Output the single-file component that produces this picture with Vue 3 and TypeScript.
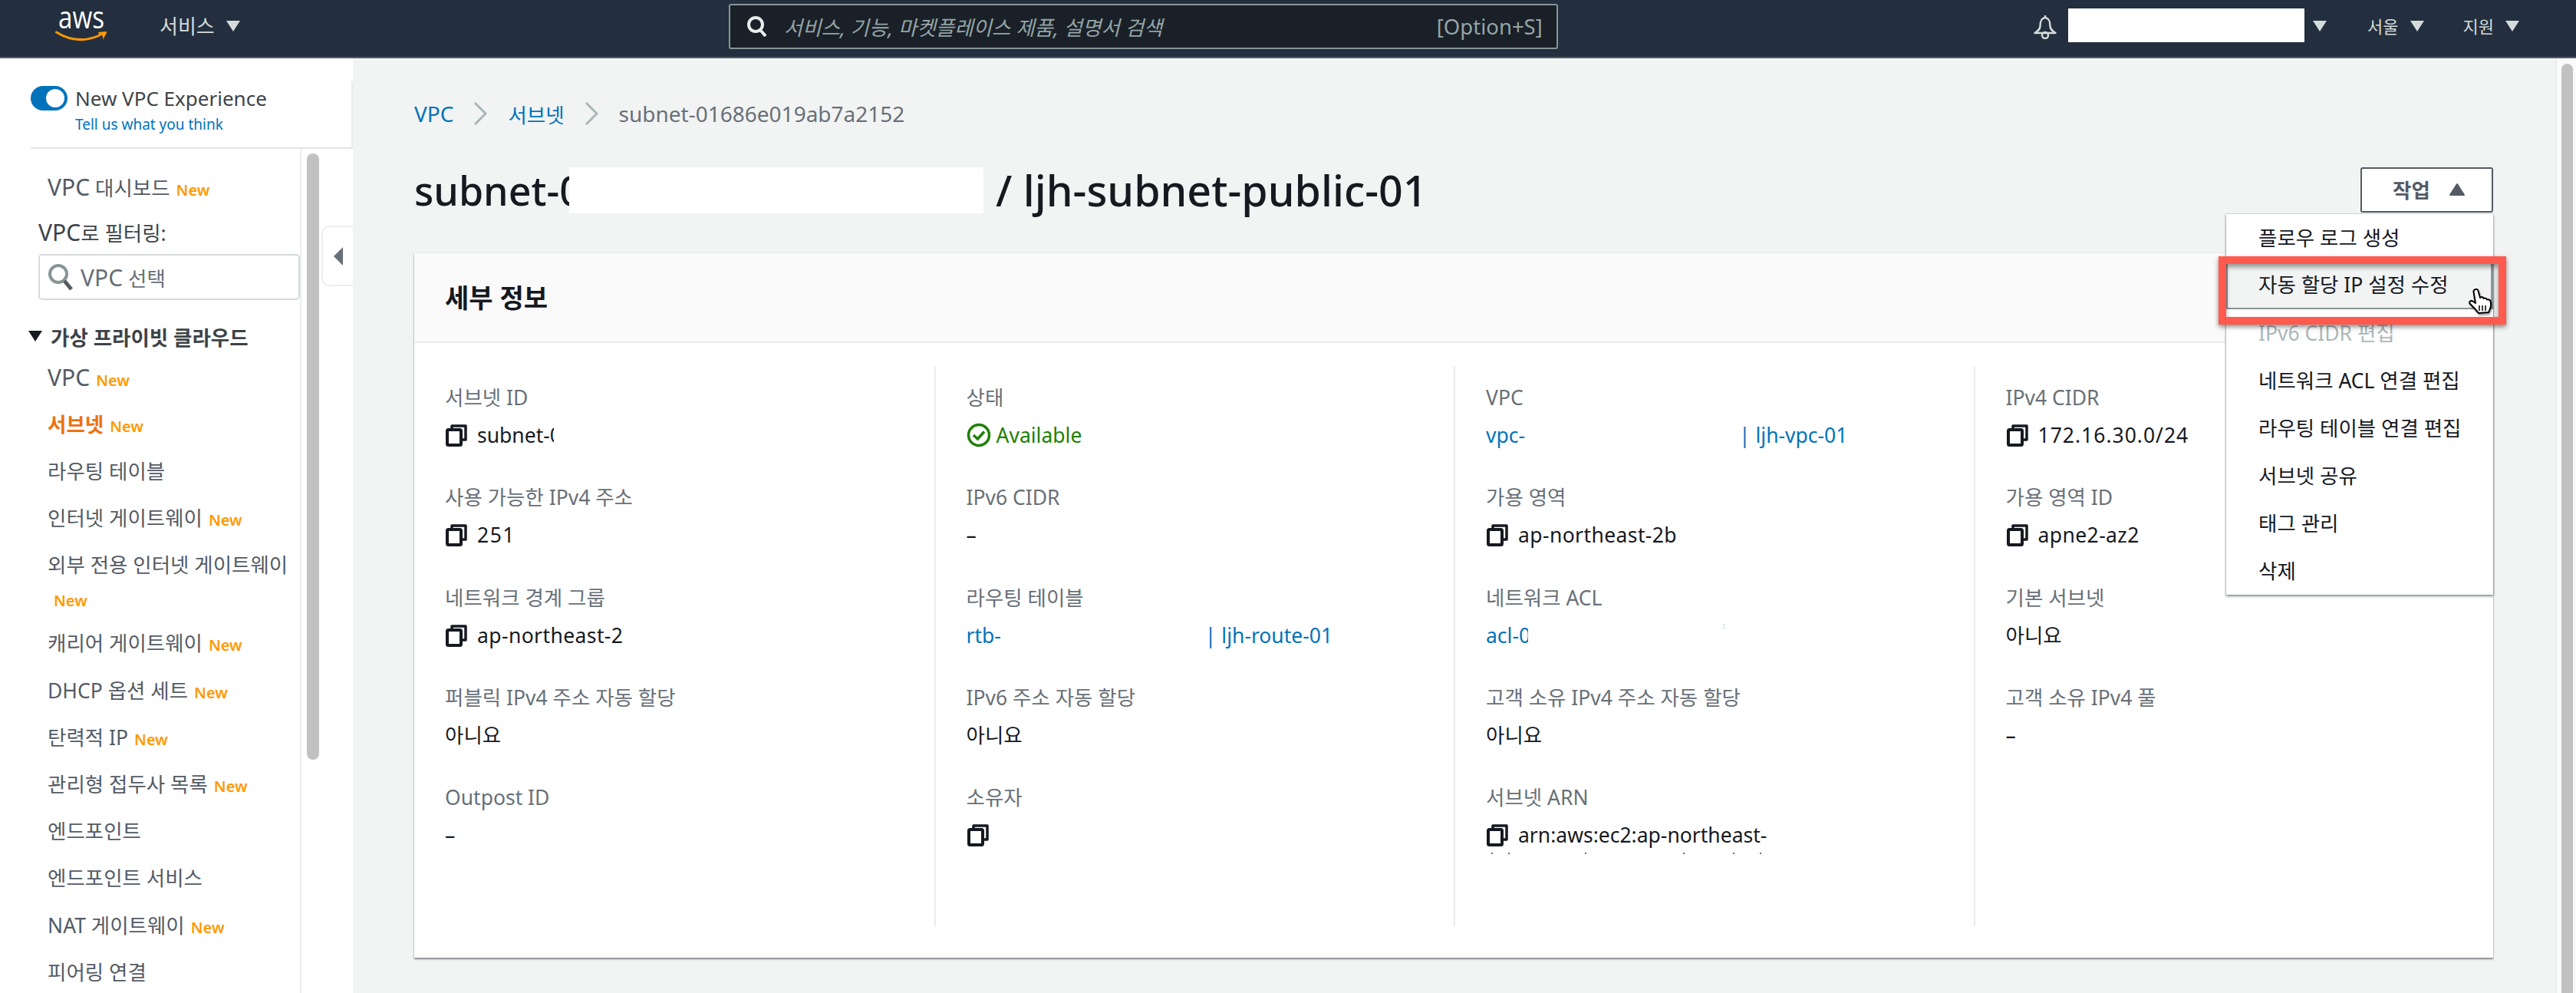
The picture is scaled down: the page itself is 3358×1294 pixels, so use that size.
<script setup lang="ts">
interface Field {
  label: string
  kind: 'text' | 'copy' | 'status' | 'link' | 'blank'
  value?: string
  clip?: number
  suffix?: string
  gap?: number
  ticks?: boolean
  spacing?: number
}
interface NavItem {
  label: string
  lead?: string
  isNew?: boolean
  active?: boolean
  wrap?: boolean
}
const navItems: NavItem[] = [
  { label: '', lead: 'VPC', isNew: true },
  { label: '서브넷', isNew: true, active: true },
  { label: '라우팅 테이블' },
  { label: '인터넷 게이트웨이', isNew: true },
  { label: '외부 전용 인터넷 게이트웨이', isNew: true, wrap: true },
  { label: '캐리어 게이트웨이', isNew: true },
  { label: 'DHCP 옵션 세트', isNew: true },
  { label: '탄력적 IP', isNew: true },
  { label: '관리형 접두사 목록', isNew: true },
  { label: '엔드포인트' },
  { label: '엔드포인트 서비스' },
  { label: 'NAT 게이트웨이', isNew: true },
  { label: '피어링 연결' },
]
const columns: Field[][] = [
  [
    { label: '서브넷 ID', kind: 'copy', value: 'subnet-01686e019ab7a2152', clip: 100 },
    { label: '사용 가능한 IPv4 주소', kind: 'copy', value: '251', spacing: 1.5 },
    { label: '네트워크 경계 그룹', kind: 'copy', value: 'ap-northeast-2', spacing: 0.4 },
    { label: '퍼블릭 IPv4 주소 자동 할당', kind: 'text', value: '아니요' },
    { label: 'Outpost ID', kind: 'text', value: '–' },
  ],
  [
    { label: '상태', kind: 'status', value: 'Available' },
    { label: 'IPv6 CIDR', kind: 'text', value: '–' },
    { label: '라우팅 테이블', kind: 'link', value: 'rtb-', suffix: '| ljh-route-01', gap: 266 },
    { label: 'IPv6 주소 자동 할당', kind: 'text', value: '아니요' },
    { label: '소유자', kind: 'copy', value: '' },
  ],
  [
    { label: 'VPC', kind: 'link', value: 'vpc-', suffix: '| ljh-vpc-01', gap: 279 },
    { label: '가용 영역', kind: 'copy', value: 'ap-northeast-2b', spacing: 0.4 },
    { label: '네트워크 ACL', kind: 'link', value: 'acl-0123456', clip: 55, suffix: ':', gap: 254 },
    { label: '고객 소유 IPv4 주소 자동 할당', kind: 'text', value: '아니요' },
    { label: '서브넷 ARN', kind: 'copy', value: 'arn:aws:ec2:ap-northeast-', ticks: true },
  ],
  [
    { label: 'IPv4 CIDR', kind: 'copy', value: '172.16.30.0/24', spacing: 1 },
    { label: '가용 영역 ID', kind: 'copy', value: 'apne2-az2', spacing: 0.4 },
    { label: '기본 서브넷', kind: 'text', value: '아니요' },
    { label: '고객 소유 IPv4 풀', kind: 'text', value: '–' },
  ],
]
const menuItems = [
  { label: '플로우 로그 생성' },
  { label: '자동 할당 IP 설정 수정', hover: true },
  { label: 'IPv6 CIDR 편집', disabled: true },
  { label: '네트워크 ACL 연결 편집' },
  { label: '라우팅 테이블 연결 편집' },
  { label: '서브넷 공유' },
  { label: '태그 관리' },
  { label: '삭제' },
]
const tickOffsets = [7, 29, 129, 257, 322, 357]
</script>

<template>
  <div class="page">
    <header class="topbar">
      <svg class="logo" viewBox="0 0 68 42" width="68" height="42">
        <text x="4" y="22" class="logo-text" textLength="60" lengthAdjust="spacingAndGlyphs">aws</text>
        <path d="M1.5 27 Q29 44 58 31" fill="none" stroke="#f90" stroke-width="3" stroke-linecap="round" />
        <path d="M56 27 L66 26 Q67.500 26 67 28 L62 37 Q63.500 30 57 30 Z" fill="#f90" />
      </svg>
      <span class="top-link services">서비스</span>
      <svg class="caret" viewBox="0 0 20 16"><path d="M1 1 H19 L10 15 Z" /></svg>
      <div class="search">
        <svg class="search-icon" viewBox="0 0 28 28" width="28" height="28">
          <circle cx="12" cy="12" r="9" fill="none" stroke="#eaeded" stroke-width="4" />
          <path d="M18 19 L25 27" stroke="#eaeded" stroke-width="4" fill="none" />
        </svg>
        <span class="search-ph">서비스, 기능, 마켓플레이스 제품, 설명서 검색</span>
        <span class="search-key">[Option+S]</span>
      </div>
      <div class="top-right">
        <svg class="bell" viewBox="0 0 32 32" width="32" height="32">
          <path d="M16 4 C10 5 9.500 10 9.500 15 C9.500 19 7 21 2.500 24 H29.500 C25 21 22.500 19 22.500 15 C22.500 10 22 5 16 4 Z" fill="none" stroke="#d5dbdb" stroke-width="2.500" stroke-linejoin="round" />
          <path d="M16 1 V4" stroke="#d5dbdb" stroke-width="2.500" />
          <circle cx="16" cy="27" r="4" fill="none" stroke="#d5dbdb" stroke-width="2.500" />
        </svg>
        <div class="account"></div>
        <svg class="caret" viewBox="0 0 20 16"><path d="M1 1 H19 L10 15 Z" /></svg>
        <span class="top-link small region">서울</span>
        <svg class="caret" viewBox="0 0 20 16"><path d="M1 1 H19 L10 15 Z" /></svg>
        <span class="top-link small support">지원</span>
        <svg class="caret" viewBox="0 0 20 16"><path d="M1 1 H19 L10 15 Z" /></svg>
      </div>
    </header>

    <div class="body">
      <aside class="sidebar">
        <div class="side-top">
          <div class="toggle-row">
            <span class="toggle"><span class="knob"></span></span>
            <span class="toggle-label">New VPC Experience</span>
          </div>
          <a class="feedback">Tell us what you think</a>
        </div>
        <nav class="nav">
          <div class="nav-item"><span><span class="lead">VPC</span> 대시보드</span><span class="new">New</span></div>
          <div class="filter-label"><span class="lead">VPC</span>로 필터링:</div>
          <div class="vpc-select">
            <svg viewBox="0 0 34 36" width="34" height="36">
              <circle cx="14" cy="14" r="11" fill="none" stroke="#879596" stroke-width="4" />
              <path d="M22 23 L31 34" stroke="#545b64" stroke-width="5" />
            </svg>
            <span><span class="lead">VPC</span> 선택</span>
          </div>
          <div class="nav-group">
            <svg viewBox="0 0 20 16" width="20" height="16"><path d="M1 1 H19 L10 15 Z" fill="#16191f" /></svg>
            <span>가상 프라이빗 클라우드</span>
          </div>
          <div v-for="item in navItems" :key="item.label + item.lead" class="nav-item" :class="{ active: item.active, wrapped: item.wrap }">
            <span class="nav-label"><span v-if="item.lead" class="lead">{{ item.lead }}</span>{{ item.label }}</span><span v-if="item.isNew" class="new">New</span>
          </div>
        </nav>
        <div class="side-thumb"></div>
        <div class="collapse"><svg viewBox="0 0 14 26" width="14" height="26"><path d="M13 1 V25 L1 13 Z" fill="#687078" /></svg></div>
      </aside>

      <main class="main">
        <div class="crumbs">
          <a class="crumb latin">VPC</a>
          <svg class="chev" viewBox="0 0 20 30" width="20" height="30"><path d="M3 1 L17 15 L3 29" fill="none" stroke="#aab7b8" stroke-width="3" /></svg>
          <a class="crumb">서브넷</a>
          <svg class="chev" viewBox="0 0 20 30" width="20" height="30"><path d="M3 1 L17 15 L3 29" fill="none" stroke="#aab7b8" stroke-width="3" /></svg>
          <span class="crumb-cur latin">subnet-01686e019ab7a2152</span>
        </div>

        <div class="title-row">
          <h1 class="title">
            <span class="title-clip">subnet-01686e019ab7a2152</span>
            <span class="title-mask"></span>
            <span class="title-name">/ ljh-subnet-public-01</span>
          </h1>
          <div class="actions">
            <button class="action-btn">
              <span>작업</span>
              <svg viewBox="0 0 22 18" width="22" height="18"><path d="M2 16 H20 L11 2 Z" fill="#545b64" stroke="#545b64" stroke-width="2" stroke-linejoin="round" /></svg>
            </button>
            <div class="menu">
              <div
                v-for="m in menuItems"
                :key="m.label"
                class="menu-item"
                :class="{ hover: m.hover, disabled: m.disabled }"
              >{{ m.label }}</div>
              <div class="highlight"></div>
              <svg class="hand" viewBox="0 0 32 34" width="32" height="34">
                <path d="M8 1.500 C10 0 12 1 12.500 3 L15 12 C17 10.500 19 11 19.500 13 C21 12 23.500 12.500 24 14.500 C25.500 14 28 14.500 28.500 16.500 C30 21 28 27 26 31 L13 32 C10 28 5 23 1.500 19.500 C0.500 17.500 2 15.500 4.500 16 L9 19 L6.500 4 C6.400 3 7 2 8 1.500 Z" fill="#fff" stroke="#000" stroke-width="2" stroke-linejoin="round" />
                <path d="M14 22 V29 M18 22 V29 M22 22 V29" stroke="#000" stroke-width="1.500" />
              </svg>
            </div>
          </div>
        </div>

        <section class="card">
          <div class="card-head"><h2>세부 정보</h2></div>
          <div class="card-body">
            <div v-for="(col, ci) in columns" :key="ci" class="col">
              <div v-for="f in col" :key="f.label" class="field">
                <div class="label">{{ f.label }}</div>
                <div class="value" :class="{ link: f.kind === 'link', ok: f.kind === 'status' }">
                  <svg v-if="f.kind === 'copy'" class="copy" viewBox="0 0 30 30" width="30" height="30">
                    <path d="M9 7 V3 H27 V21 H22" fill="none" stroke="#16191f" stroke-width="3.500" stroke-linejoin="round" />
                    <rect x="3" y="8" width="18" height="20" rx="1.500" fill="none" stroke="#16191f" stroke-width="4" />
                  </svg>
                  <svg v-if="f.kind === 'status'" class="status" viewBox="0 0 32 32" width="32" height="32">
                    <circle cx="16" cy="16" r="13.500" fill="none" stroke="#1d8102" stroke-width="3.500" />
                    <path d="M9 16 L14.500 21 L23 11.500" fill="none" stroke="#1d8102" stroke-width="3.500" />
                  </svg>
                  <span
                    class="val-text"
                    :class="{ clipped: f.clip }"
                    :style="{ width: f.clip ? f.clip + 'px' : undefined, letterSpacing: f.spacing ? f.spacing + 'px' : undefined }"
                  >{{ f.value }}</span>
                  <span v-if="f.suffix" :class="{ speck: f.suffix === ':' }" :style="{ marginLeft: f.gap + 'px' }">{{ f.suffix }}</span>
                  <span v-if="f.ticks" class="ticks">
                    <i v-for="t in tickOffsets" :key="t" :style="{ left: t + 'px' }"></i>
                  </span>
                </div>
              </div>
            </div>
          </div>
        </section>
      </main>

      <div class="page-scroll"><div class="page-thumb"></div></div>
    </div>
  </div>
</template>

<style>
html, body { margin: 0; padding: 0; background: #f2f3f3; height: 1294px; overflow: hidden; }
</style>

<style scoped>
.page {
  width: 3358px;
  height: 1294px;
  overflow: hidden;
  display: flex;
  flex-direction: column;
  font-family: "Noto Sans", "Noto Sans CJK KR", sans-serif;
  font-size: 26.500px;
  color: #16191f;
  background: #f2f3f3;
}
.topbar {
  height: 76px;
  flex: none;
  box-sizing: border-box;
  border-bottom: 2px solid #545b64;
  background: #232f3e;
  display: flex;
  align-items: center;
}
.logo { margin-left: 72px; margin-top: -2px; flex: none; }
.logo-text { font-family: "Open Sans", sans-serif; font-size: 40px; fill: #fff; }
.top-link { color: #d5dbdb; font-size: 26px; line-height: 40px; margin-top: -6px; }
.top-link.small { font-size: 22px; }
.services { margin-left: 68px; }
.caret { width: 20px; height: 16px; fill: #d5dbdb; flex: none; margin-left: 14px; margin-top: -6px; }
.search {
  width: 1081px;
  height: 59px;
  box-sizing: border-box;
  margin-left: 636px;
  margin-top: -6px;
  border: 2px solid #879596;
  border-radius: 3px;
  background: #1a2028;
  display: flex;
  align-items: center;
  padding: 0 18px 0 21px;
}
.search-icon { flex: none; }
.search-ph { margin-left: 21px; font-style: italic; color: #95a5a6; font-size: 26.500px; }
.search-key { margin-left: auto; color: #95a5a6; font-size: 27.500px; }
.top-right { margin-left: auto; padding-right: 73px; display: flex; align-items: center; }
.bell { margin-top: -4px; }
.account { width: 308px; height: 44px; margin-left: 14px; margin-top: -8px; background: #fff; }
.account + .caret { margin-left: 10px; }
.region { margin-left: 52px; }
.support { margin-left: 50px; }

.body { flex: 1; display: flex; min-height: 0; position: relative; }
.sidebar { width: 460px; flex: none; background: #fff; position: relative; }
.side-top {
  margin-left: 40px;
  padding-top: 36px;
  border-bottom: 2px solid #e4e6e6;
  position: relative;
  height: 80px;
}
.side-top::after {
  content: "";
  position: absolute;
  right: 0;
  top: 30px;
  bottom: 0;
  width: 2px;
  background: #eaeded;
}
.toggle-row { display: flex; align-items: center; height: 32px; }
.toggle {
  width: 48px;
  height: 32px;
  border-radius: 16px;
  background: #0073bb;
  position: relative;
  flex: none;
}
.knob {
  position: absolute;
  left: 20px;
  top: 4px;
  width: 24px;
  height: 24px;
  border-radius: 50%;
  background: #fff;
}
.toggle-label { margin-left: 10px; font-size: 26px; color: #3d4347; white-space: nowrap; }
.feedback { display: block; margin: 4px 0 0 58px; font-size: 19px; line-height: 28px; color: #0073bb; white-space: nowrap; }

.nav {
  width: 393px;
  height: 1100px;
  box-sizing: border-box;
  border-right: 2px solid #eaeded;
  padding-top: 19px;
  overflow: hidden;
  color: #545b64;
}
.nav-item {
  height: 61.200px;
  line-height: 44px;
  box-sizing: border-box;
  padding: 8.500px 0 0 62px;
  white-space: nowrap;
}
.lead { font-size: 30px; }
.nav-item.wrapped { height: 102px; white-space: normal; padding-right: 4px; }
.nav-item.wrapped .new { margin-left: 8px; }
.nav-item.wrapped .nav-label { display: block; white-space: nowrap; }
.nav-item.active .nav-label { color: #ec7211; font-weight: 700; }
.new { color: #ff9900; font-size: 20px; font-weight: 600; margin-left: 8px; }
.filter-label { margin: 7px 0 0 50px; height: 44px; line-height: 44px; color: #3d4347; font-size: 26.500px; }
.vpc-select {
  margin: 6px 0 0 50px;
  width: 341px;
  height: 60px;
  box-sizing: border-box;
  border: 2px solid #d5dbdb;
  border-radius: 5px;
  display: flex;
  align-items: center;
  padding-left: 10px;
  color: #687078;
  gap: 9px;
}
.nav-group {
  margin: 24px 0 0 36px;
  height: 46px;
  display: flex;
  align-items: center;
  gap: 10px;
  font-weight: 700;
  color: #3d4347;
  font-size: 26.500px;
}
.side-thumb {
  position: absolute;
  left: 400px;
  top: 124px;
  width: 16px;
  height: 790px;
  border-radius: 8px;
  background: #c1c1c1;
}
.collapse {
  position: absolute;
  left: 419px;
  top: 218px;
  width: 41px;
  height: 79px;
  box-sizing: border-box;
  background: #fff;
  border: 2px solid #eaeded;
  border-right: none;
  border-radius: 10px 0 0 10px;
  display: flex;
  align-items: center;
  padding-left: 13px;
}

.main { flex: 1; padding: 52px 81px 0 80px; min-width: 0; }
.crumbs { display: flex; align-items: center; height: 40px; }
.latin { font-size: 28px; }
.crumb { color: #0073bb; }
.chev { margin: 0 26px 0 25px; flex: none; }
.crumb-cur { color: #687078; }
.title-row { display: flex; justify-content: space-between; margin-top: 50px; height: 60px; }
.title { margin: 0; display: flex; align-items: center; font-size: 55.500px; font-weight: 500; line-height: 60px; white-space: nowrap; }
.title-clip { width: 202px; overflow: hidden; font-size: 52px; }
.title-mask { width: 540px; height: 60px; background: #fff; flex: none; }
.title-name { margin-left: 16px; }
.actions { position: relative; width: 173px; }
.action-btn {
  width: 173px;
  height: 59px;
  box-sizing: border-box;
  border: 2px solid #545b64;
  border-radius: 3px;
  background: #fff;
  color: #545b64;
  font: inherit;
  font-size: 26.500px;
  font-weight: 700;
  display: flex;
  align-items: center;
  justify-content: center;
  gap: 24px;
  padding: 0 0 2px 6px;
}
.menu {
  position: absolute;
  top: 61px;
  right: 0;
  width: 348px;
  background: #fff;
  box-shadow: 0 2px 3px rgba(60, 75, 85, .6), 0 0 2px rgba(100, 110, 115, .5);
  z-index: 5;
}
.menu-item {
  height: 62px;
  line-height: 62px;
  box-sizing: border-box;
  padding-left: 42px;
  white-space: nowrap;
}
.menu-item.hover { background: #f2f3f3; border: 2px solid #879596; border-width: 0 3px 2px 2px; padding-left: 40px; line-height: 60px; }
.menu-item.disabled { color: #aab7b8; }
.highlight {
  position: absolute;
  left: -10px;
  top: 55px;
  width: 375px;
  height: 89px;
  box-sizing: border-box;
  border: 10px solid #ff5a4d;
  box-shadow: 0 3px 6px rgba(0, 0, 0, .45), inset 0 4px 6px rgba(0, 0, 0, .4);
}
.hand { position: absolute; left: 316px; top: 97px; filter: drop-shadow(1px 2px 1px rgba(0, 0, 0, .4)); }

.card {
  margin-top: 52px;
  height: 918px;
  background: #fff;
  box-shadow: 0 2px 2px rgba(84, 91, 100, .7), 0 0 1px rgba(0, 28, 36, .2);
  display: flex;
  flex-direction: column;
}
.card-head {
  height: 117px;
  flex: none;
  box-sizing: border-box;
  padding: 0 0 3px 40px;
  background: #fafafa;
  border-bottom: 2px solid #eaeded;
  display: flex;
  align-items: center;
}
.card-head h2 { margin: 0; font-size: 34px; font-weight: 700; }
.card-body { display: grid; grid-template-columns: repeat(4, 1fr); padding-top: 31px; }
.col { height: 729px; box-sizing: border-box; padding: 20px 0 0 40px; border-left: 2px solid #eaeded; }
.col:first-child { border-left: none; }
.field { height: 130.250px; }
.label { line-height: 40px; color: #687078; white-space: nowrap; }
.value { margin-top: 9px; line-height: 40px; height: 40px; display: flex; align-items: center; white-space: nowrap; position: relative; }
.value.link { color: #0073bb; }
.value.ok { color: #1d8102; }
.copy { flex: none; margin-right: 12px; }
.status { flex: none; margin-right: 7px; }
.clipped { display: inline-block; overflow: hidden; flex: none; }
.speck { font-size: 8px; line-height: 8px; margin-top: -24px; }
.ticks { position: absolute; left: 0; top: 43px; height: 2px; width: 400px; }
.ticks i { position: absolute; top: 0; width: 2px; height: 2px; background: #6a7078; }
.page-scroll { width: 27px; flex: none; background: #fafafa; border-left: 2px solid #eaeded; box-sizing: border-box; padding: 7px 4px 0 6px; }
.page-thumb { height: 100%; background: #c1c1c1; border-radius: 8px 8px 0 0; }
</style>
